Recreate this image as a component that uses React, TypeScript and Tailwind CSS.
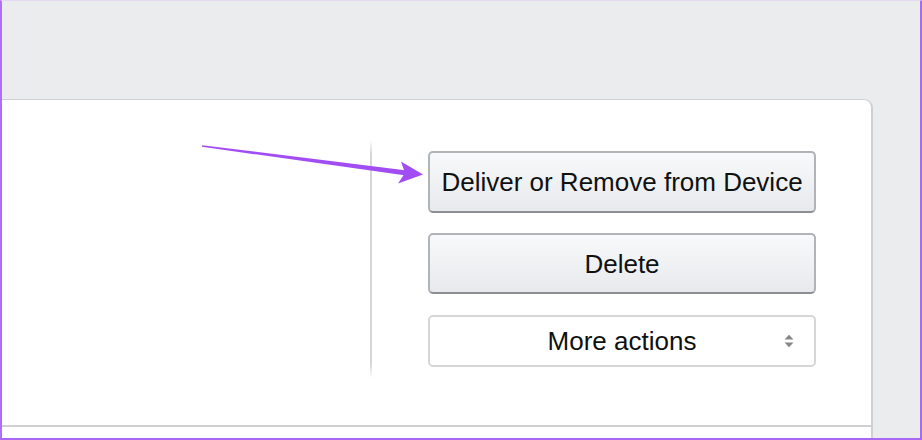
import React from "react";

function UpDown() {
  return (
    <svg width="12" height="16" viewBox="0 0 12 16" className="block">
      <path d="M1.5 6.5 L6 1.8 L10.5 6.5 Z" fill="#878787" />
      <path d="M1.5 9.5 L6 14.2 L10.5 9.5 Z" fill="#878787" />
    </svg>
  );
}

export default function App() {
  const font = { fontFamily: '"Liberation Sans", Arial, sans-serif' };
  return (
    <div
      className="relative w-[922px] h-[440px] overflow-hidden bg-[#ebecee] border-l-2 border-r-2 border-b-2 border-t border-l-[#b06df6] border-r-[#a66cf0] border-b-[#a968f3] border-t-[#e4d8f3]"
      style={font}
    >
      <div className="pt-[98px] h-full">
        <div className="w-[871px] h-full bg-white border-t border-r-2 border-[#d0d0d3] rounded-tr-[9px] flex flex-col">
          <div className="flex mt-[40px] h-[238px]">
            <div className="w-[368px] shrink-0" />
            <div className="w-[2px] shrink-0 bg-[linear-gradient(to_bottom,transparent,#d5d5d9_6%,#d5d5d9_94%,transparent)]" />
            <div className="ml-[56px] mt-[11px] w-[388px] flex flex-col">
              <button className="h-[62px] w-full rounded-[5px] border-2 border-[#b0b3b8] border-b-[#8b8e93] bg-[linear-gradient(to_bottom,#f8f9fa,#e7e9ec)] text-[26px] leading-none text-[#0f1111] flex items-center justify-center pb-[1px]">
                Deliver or Remove from Device
              </button>
              <button className="mt-[20px] h-[61px] w-full rounded-[5px] border-2 border-[#b0b3b8] border-b-[#8b8e93] bg-[linear-gradient(to_bottom,#f8f9fa,#e7e9ec)] text-[26px] leading-none text-[#0f1111] flex items-center justify-center">
                Delete
              </button>
              <button className="relative mt-[21px] h-[52px] w-full rounded-[5px] border-2 border-[#d6d6d8] bg-white text-[26px] leading-none text-[#0f1111] flex items-center justify-center">
                More actions
                <span className="absolute right-[19px] top-1/2 -translate-y-1/2">
                  <UpDown />
                </span>
              </button>
            </div>
          </div>
          <div className="mt-[47px] h-[2px] bg-[#d0d0d2]" />
        </div>
      </div>
      <svg
        className="absolute left-[-2px] top-[-1px] pointer-events-none"
        width="922"
        height="440"
        viewBox="0 0 922 440"
      >
        <polygon points="202,145.2 407,170.5 406,175.5 202,146.8" fill="#a24cf3" />
        <polygon points="401,161.5 423,174.5 398,183.5 405,173" fill="#a24cf3" />
      </svg>
    </div>
  );
}
